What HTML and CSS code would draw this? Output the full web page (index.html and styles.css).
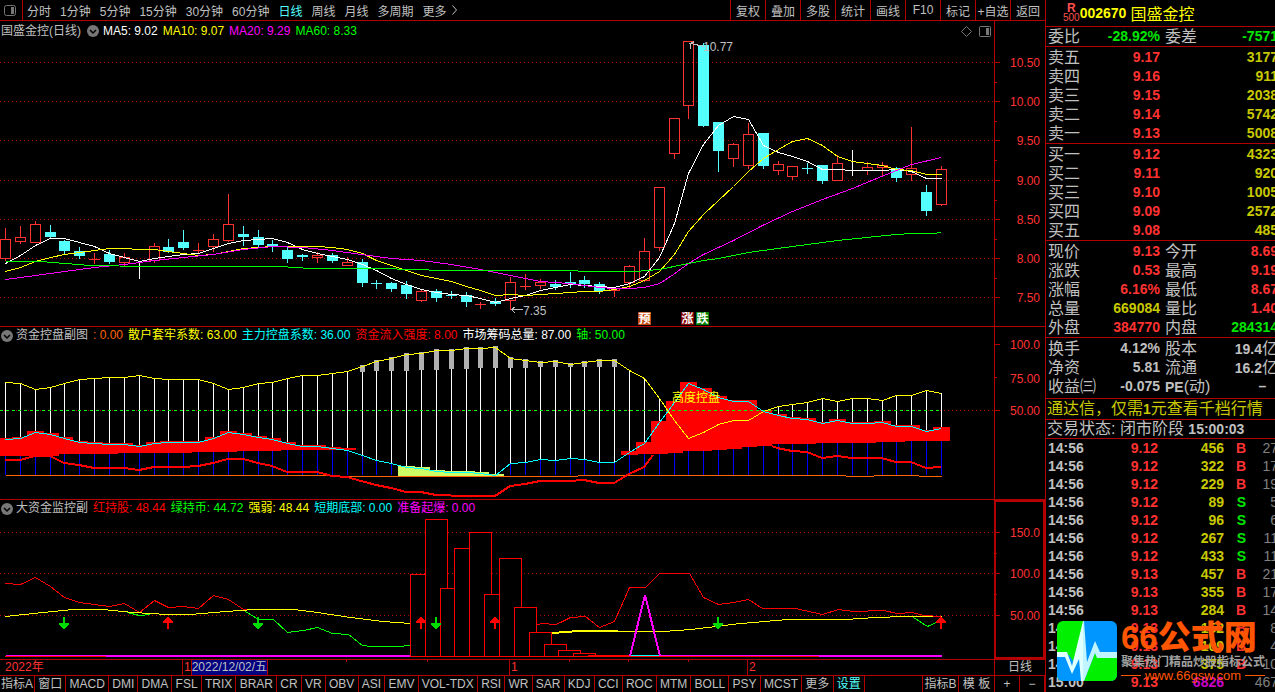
FILE: index.html
```html
<!DOCTYPE html>
<html lang="zh-CN">
<head>
    <meta charset="UTF-8">
    <meta name="viewport" content="width=device-width, initial-scale=1.0">
    <title>国盛金控 002670</title>
    <link rel="stylesheet" href="styles.css">
</head>
<body>

    <main class="main">
        <nav class="toolbar">
            <button class="layout-btn" aria-label="侧栏">
                <svg width="12" height="11" viewBox="0 0 12 11"><rect x="0.5" y="0.5" width="11" height="10" rx="2" fill="none" stroke="#777"/><rect x="7" y="2" width="3" height="7" fill="#777"/></svg>
            </button>
            <div class="periods">
                <button>分时</button>
                <button>1分钟</button>
                <button>5分钟</button>
                <button>15分钟</button>
                <button>30分钟</button>
                <button>60分钟</button>
                <button class="active">日线</button>
                <button>周线</button>
                <button>月线</button>
                <button>多周期</button>
                <button class="more">更多
                    <svg width="5" height="10" viewBox="0 0 5 10"><path d="M0.5 0.5 L4.5 5 L0.5 9.5" fill="none" stroke="#c0c0c0"/></svg>
                </button>
            </div>
            <div class="tools">
                <button>复权</button>
                <button>叠加</button>
                <button>多股</button>
                <button>统计</button>
                <button>画线</button>
                <button>F10</button>
                <button>标记</button>
                <button>+自选</button>
                <button>返回</button>
            </div>
        </nav>

        <section class="panel">
            <div class="plot">
                <div class="legend legend-main">
                    <span>国盛金控(日线)</span>
                    <button class="drop" aria-label="展开"><svg width="12" height="12" viewBox="0 0 12 12"><circle cx="6" cy="6" r="6" fill="#777"/><path d="M3 5 L6 8 L9 5" fill="none" stroke="#000" stroke-width="1.5"/></svg></button>
                    <span class="white">MA5: 9.02</span>
                    <span class="yellow">MA10: 9.07</span>
                    <span class="magenta">MA20: 9.29</span>
                    <span class="green">MA60: 8.33</span>
                    <span class="legend-icons">
                        <svg width="11" height="11" viewBox="0 0 11 11"><path d="M5.5 0.5 L10.5 5.5 L5.5 10.5 L0.5 5.5 Z" fill="none" stroke="#777"/></svg>
                        <svg width="12" height="11" viewBox="0 0 12 11"><rect x="0.5" y="0.5" width="11" height="10" rx="1" fill="none" stroke="#777"/><rect x="7" y="2" width="3" height="7" fill="#777"/></svg>
                    </span>
                </div>
                <svg id="kline" class="chart" viewBox="0 40 994 286" preserveAspectRatio="none"></svg>
            </div>
            <div class="axis"><svg id="axis1" class="chart" viewBox="0 21 50 305" preserveAspectRatio="none"></svg></div>
        </section>

        <section class="panel">
            <div class="plot">
                <div class="legend">
                    <button class="drop" aria-label="展开"><svg width="12" height="12" viewBox="0 0 12 12"><circle cx="6" cy="6" r="6" fill="#777"/><path d="M3 5 L6 8 L9 5" fill="none" stroke="#000" stroke-width="1.5"/></svg></button>
                    <span>资金控盘副图</span>
                    <span class="orange">: 0.00</span>
                    <span class="yellow">散户套牢系数: 63.00</span>
                    <span class="aqua">主力控盘系数: 36.00</span>
                    <span class="red">资金流入强度: 8.00</span>
                    <span class="white">市场筹码总量: 87.00</span>
                    <span class="green">轴: 50.00</span>
                </div>
                <svg id="control" class="chart" viewBox="0 344 994 155" preserveAspectRatio="none"></svg>
            </div>
            <div class="axis"><svg id="axis2" class="chart" viewBox="0 327 50 172" preserveAspectRatio="none"></svg></div>
        </section>

        <section class="panel">
            <div class="plot">
                <div class="legend">
                    <button class="drop" aria-label="展开"><svg width="12" height="12" viewBox="0 0 12 12"><circle cx="6" cy="6" r="6" fill="#777"/><path d="M3 5 L6 8 L9 5" fill="none" stroke="#000" stroke-width="1.5"/></svg></button>
                    <span>大资金监控副</span>
                    <span class="red">红持股: 48.44</span>
                    <span class="green">绿持币: 44.72</span>
                    <span class="yellow">强弱: 48.44</span>
                    <span class="aqua">短期底部: 0.00</span>
                    <span class="magenta">准备起爆: 0.00</span>
                </div>
                <svg id="funds" class="chart" viewBox="0 517 994 142" preserveAspectRatio="none"></svg>
            </div>
            <div class="axis selected"><svg id="axis3" class="chart" viewBox="1 502 47 155" preserveAspectRatio="none"></svg></div>
        </section>

        <div class="timeline">
            <span class="year">2022年</span>
            <span class="month">1<span class="date">2022/12/02/五</span></span>
            <span class="month">1</span>
            <span class="month">2</span>
            <span class="period">日线</span>
            <svg class="marks" viewBox="0 0 1045 2" preserveAspectRatio="none"><path d="M346.5 0V2M427.5 0V2M569.5 0V2M628.5 0V2M688.5 0V2" stroke="#b40000"/></svg>
        </div>

        <nav class="tabs">
            <div class="tab-list">
                <button class="first">指标A</button>
                <button>窗口</button>
                <button>MACD</button>
                <button>DMI</button>
                <button>DMA</button>
                <button>FSL</button>
                <button>TRIX</button>
                <button>BRAR</button>
                <button>CR</button>
                <button>VR</button>
                <button>OBV</button>
                <button>ASI</button>
                <button>EMV</button>
                <button>VOL-TDX</button>
                <button>RSI</button>
                <button>WR</button>
                <button>SAR</button>
                <button>KDJ</button>
                <button>CCI</button>
                <button>ROC</button>
                <button>MTM</button>
                <button>BOLL</button>
                <button>PSY</button>
                <button>MCST</button>
                <button>更多</button>
                <button class="active">设置</button>
            </div>
            <div class="tabs-right">
                <button>指标B</button>
                <button>模 板</button>
                <button class="zoom">+</button>
                <button class="zoom">−</button>
            </div>
        </nav>
    </main>

    <aside class="side">
        <h1 class="stock"><span class="tag">R<small>500</small></span><b>002670</b><span class="name">国盛金控</span></h1>

        <table class="quote">
            <tr><th>委比</th><td class="down">-28.92%</td><th>委差</th><td class="down">-7571</td></tr>
        </table>
        <table class="quote pad">
            <tr><th>卖五</th><td>9.17</td><th></th><td class="vol">3177</td></tr>
            <tr><th>卖四</th><td>9.16</td><th></th><td class="vol">911</td></tr>
            <tr><th>卖三</th><td>9.15</td><th></th><td class="vol">2038</td></tr>
            <tr><th>卖二</th><td>9.14</td><th></th><td class="vol">5742</td></tr>
            <tr><th>卖一</th><td>9.13</td><th></th><td class="vol">5008</td></tr>
        </table>
        <table class="quote pad">
            <tr><th>买一</th><td>9.12</td><th></th><td class="vol">4323</td></tr>
            <tr><th>买二</th><td>9.11</td><th></th><td class="vol">920</td></tr>
            <tr><th>买三</th><td>9.10</td><th></th><td class="vol">1005</td></tr>
            <tr><th>买四</th><td>9.09</td><th></th><td class="vol">2572</td></tr>
            <tr><th>买五</th><td>9.08</td><th></th><td class="vol">485</td></tr>
        </table>
        <table class="quote pad">
            <tr><th>现价</th><td>9.13</td><th>今开</th><td>8.69</td></tr>
            <tr><th>涨跌</th><td>0.53</td><th>最高</th><td>9.19</td></tr>
            <tr><th>涨幅</th><td>6.16%</td><th>最低</th><td>8.67</td></tr>
            <tr><th>总量</th><td class="vol">669084</td><th>量比</th><td>1.40</td></tr>
            <tr><th>外盘</th><td>384770</td><th>内盘</th><td class="down">284314</td></tr>
        </table>
        <table class="quote pad info">
            <tr><th>换手</th><td>4.12%</td><th>股本</th><td>19.4<span class="unit">亿</span></td></tr>
            <tr><th>净资</th><td>5.81</td><th>流通</th><td>16.2<span class="unit">亿</span></td></tr>
            <tr><th>收益㈢</th><td>-0.075</td><th><b>PE</b>(动)</th><td>–&nbsp;&nbsp;&nbsp;</td></tr>
        </table>
        <p class="ad">通达信，仅需<b>1</b>元查看千档行情</p>
        <p class="state">交易状态: 闭市阶段 <b>15:00:03</b></p>

        <table class="ticks" id="ticks"></table>

        <div class="brand">
            <svg width="60" height="60" viewBox="0 0 60 60">
                <defs><clipPath id="round"><rect width="60" height="60" rx="6"/></clipPath></defs>
                <g clip-path="url(#round)">
                    <rect width="27" height="60" fill="#00f000"/>
                    <rect x="27" width="33" height="60" fill="#0096ff"/>
                    <path d="M0 34 V60 H27 V15 L16 40 L12 34 Z" fill="#0096ff"/>
                    <path d="M27 60 L38 32 L42 37 H60 V60 Z" fill="#00f000"/>
                    <path d="M0 31 H10 L15 45 L26 0 V60 H24 L22 38 L15 53 L8 36 H0 Z" fill="#e0ffff"/>
                    <path d="M26 0 H27 L30 41 L38 20 L43 31 H60 V37 H40 L38 32 L27 60 H26 Z" fill="#c0f4ff"/>
                </g>
            </svg>
            <div class="brand-text">
                <strong>66公式网</strong>
                <span>聚集热门精品炒股指标公式</span>
                <em>www.66gsw.com</em>
            </div>
        </div>
    </aside>

    <script src="script.js"></script>
</body>
</html>
```

FILE: styles.css
```css
* {
    box-sizing: border-box;
}
body {
    margin: 0;
    height: 100vh;
    display: grid;
    grid-template-columns: 1fr 230px;
    overflow: hidden;
    background: #000;
    color: #c0c0c0;
    font-family: "Liberation Sans", "Noto Sans CJK SC", sans-serif;
    font-size: 12px;
}
button {
    background: none;
    border: 0;
    padding: 0;
    color: inherit;
    font: inherit;
    white-space: nowrap;
    cursor: pointer;
}
svg {
    display: block;
}
.main {
    display: grid;
    grid-template-rows: 21px 306fr 173fr 160fr 16px 16px;
    min-width: 0;
    min-height: 0;
}

/* top bar */
.toolbar {
    display: flex;
    border-bottom: 1px solid #b40000;
}
.layout-btn {
    width: 23px;
    padding-left: 4px;
    border-right: 1px solid #b40000;
}
.periods {
    display: flex;
    flex: 1;
    gap: 9px;
    padding-left: 4px;
}
.more {
    display: flex;
    align-items: center;
    gap: 5px;
}
.tools button {
    width: 35px;
    height: 20px;
    border-left: 1px solid #b40000;
}
.tools {
    display: flex;
}
.active {
    color: #54ffff;
}

/* chart panels */
.panel {
    display: flex;
    min-height: 0;
    border-bottom: 1px solid #b40000;
}
.plot {
    display: flex;
    flex-direction: column;
    flex: 1;
    min-width: 0;
}
.legend {
    display: flex;
    align-items: center;
    gap: 5px;
    height: 17px;
    padding-left: 1px;
    white-space: nowrap;
    line-height: 17px;
}
.legend .drop {
    margin-right: -2px;
}
.legend-main {
    height: 19px;
    padding-top: 1px;
    line-height: 18px;
}
.legend-main .drop {
    margin: 0 -1px 0 1px;
}
.legend-icons {
    display: flex;
    gap: 7px;
    margin-left: auto;
    padding-right: 3px;
}
.chart {
    flex: 1;
    width: 100%;
    height: 100%;
    min-height: 0;
    shape-rendering: crispEdges;
}
.chart text {
    font-size: 12px;
}
.axis {
    width: 51px;
    border-left: 1px solid #b40000;
}
.axis text {
    fill: #ff3232;
}
.axis.selected {
    border: 2px solid #b40000;
}
.white { color: #fff; }
.yellow { color: #ffff00; }
.magenta { color: #ff00ff; }
.green { color: #00ff00; }
.orange { color: #ff6400; }
.aqua { color: #00ffff; }
.red { color: #ff0000; }

/* dates under the charts */
.timeline {
    position: relative;
    display: grid;
    grid-template-columns: 182fr 327fr 238fr 247fr 51px;
    border-bottom: 1px solid #b40000;
    color: #ff3232;
    line-height: 15px;
}
.year {
    padding-left: 5px;
}
.month {
    display: flex;
    border-left: 1px solid #b40000;
    padding-left: 1px;
}
.date {
    background: #000080;
    color: #c0c0c0;
    border: solid #b40000;
    border-width: 0 1px;
}
.period {
    border-left: 1px solid #b40000;
    color: #c0c0c0;
    text-align: center;
}
.marks {
    position: absolute;
    top: 0;
    left: 0;
    width: 100%;
    height: 2px;
}

/* indicator tabs */
.tabs {
    display: flex;
    justify-content: space-between;
    overflow: hidden;
}
.tab-list {
    display: flex;
    flex: 1;
    max-width: 865px;
}
.tabs button {
    flex: auto;
    padding: 0 3px;
    border-right: 1px solid #b40000;
    line-height: 16px;
}
.tabs .first {
    flex: none;
    padding: 0 1px;
}
.tabs-right {
    display: flex;
    border-left: 1px solid #b40000;
}
.tabs-right button {
    width: 36px;
    padding: 0;
}
.tabs-right .zoom {
    width: 25px;
}

/* quote column */
.side {
    position: relative;
    border-left: 1px solid #b40000;
    overflow: hidden;
    white-space: nowrap;
    font-size: 16px;
}
.side b {
    font-size: 14px;
}
.stock {
    display: flex;
    align-items: center;
    height: 27px;
    margin: 0;
    padding-left: 17px;
    border-bottom: 1px solid #b40000;
    color: #ffff00;
    font-size: 16px;
    font-weight: normal;
}
.tag {
    display: flex;
    flex-direction: column;
    align-items: center;
    color: #ff5050;
    font-size: 12px;
    font-weight: bold;
    line-height: 10px;
}
.tag small {
    font-size: 10px;
    font-weight: normal;
}
.name {
    padding-left: 4px;
}
table {
    table-layout: fixed;
    border-spacing: 0;
}
th, td {
    padding: 0;
}
.quote {
    display: block;
    width: 240px;
    padding-left: 2px;
    border-bottom: 1px solid #b40000;
}
.quote.pad {
    padding-top: 1px;
}
.quote.info {
    padding-bottom: 2px;
}
.quote tr {
    display: grid;
    grid-template-columns: 32px 80px 4px 114px;
    height: 19px;
    line-height: 19px;
}
.quote th {
    font-weight: normal;
    text-align: left;
}
.quote td {
    color: #ff3232;
    font-size: 14px;
    font-weight: bold;
    text-align: right;
}
.quote th:nth-child(3) {
    padding-left: 5px;
}
.quote .down {
    color: #00e600;
}
.quote .vol {
    color: #c8c800;
}
.quote.info td {
    color: #c0c0c0;
}
.unit {
    font-size: 16px;
    font-weight: normal;
}
.ad, .state {
    margin: 0;
    padding-left: 1px;
    border-bottom: 1px solid #b40000;
}
.ad {
    height: 21px;
    line-height: 20px;
    color: #c8c800;
}
.state {
    height: 19px;
    line-height: 18px;
}
.ticks {
    width: 232px;
    padding-left: 2px;
    font-size: 14px;
    font-weight: bold;
}
.ticks td {
    height: 18px;
    line-height: 18px;
    text-align: right;
}
.ticks td:nth-child(1) { width: 40px; text-align: left; }
.ticks td:nth-child(2) { width: 70px; color: #ff3232; }
.ticks td:nth-child(3) { width: 66px; color: #c8c800; }
.ticks td:nth-child(4) { width: 22px; }
.ticks td:nth-child(5) { color: #808080; font-weight: normal; }
.ticks .buy { color: #ff3232; }
.ticks .sell { color: #00e600; }
.ticks tr:last-child td:nth-child(3) { color: #c800c8; }

/* site badge over the tick list */
.brand {
    position: absolute;
    left: 11px;
    bottom: 10px;
    display: flex;
    gap: 4px;
}
.brand-text {
    display: flex;
    flex-direction: column;
    color: #ff5500;
}
.brand-text strong {
    font-size: 33px;
    font-weight: 900;
    line-height: 34px;
}
.brand-text span {
    color: #a0a0a0;
    font-size: 12px;
    font-weight: bold;
    line-height: 14px;
}
.brand-text em {
    display: flex;
    align-items: center;
    gap: 4px;
    font-size: 13px;
    font-style: normal;
    line-height: 13px;
}
.brand-text em::before, .brand-text em::after {
    content: "";
    width: 20px;
    border-top: 1px solid #ff5500;
}
```

FILE: script.js
```js
const LINE = "#b40000";
const RED = "#ff3232";
const CYAN = "#54ffff";

// x of the i-th trading day
const X = i => 5 + Math.round(i * 936 / 63);

function line(x1, y1, x2, y2, color, w = 1, dash = "") {
    return `<line x1="${x1}" y1="${y1}" x2="${x2}" y2="${y2}" stroke="${color}" stroke-width="${w}" stroke-dasharray="${dash}"/>`;
}
function rect(x, y, w, h, fill, stroke = "none") {
    return `<rect x="${x}" y="${y}" width="${w}" height="${h}" fill="${fill}" stroke="${stroke}"/>`;
}
// odd line widths sit on pixel centres
function poly(points, color, w = 1) {
    const pts = points.split(" ").map(p => p.split(",").map(n => Math.floor(n) + w % 2 / 2).join(",")).join(" ");
    return `<polyline points="${pts}" fill="none" stroke="${color}" stroke-width="${w}"/>`;
}
function series(ys) {
    return ys.map((y, i) => X(i) + "," + y).join(" ");
}
function text(x, y, s, fill, extra = "") {
    return `<text x="${x}" y="${y}" fill="${fill}" ${extra}>${s}</text>`;
}
function draw(id, s) {
    document.getElementById(id).innerHTML = s;
}
function axis(id, labels, minor) {
    let s = "";
    labels.forEach(([y, t]) => {
        s += line(0, y + 0.5, 5, y + 0.5, LINE) + text(45, y + 5, t, RED, 'text-anchor="end"');
    });
    minor.forEach(y => s += line(0, y + 0.5, 2, y + 0.5, LINE));
    draw(id, s);
}

// kind, high, body top, body bottom, low
const candles = [
    ["r",228,239,258,260],["r",226,237,241,243],["r",221,224,242,242],["c",225,232,237,238],
    ["c",240,241,251,254],["c",247,251,256,258],["r",253,259,259,263],["c",250,254,262,263],
    ["r",253,257,262,265],["w",262,266,266,278],["r",243,246,260,262],["c",239,247,252,252],
    ["c",230,242,248,249],["r",243,250,251,252],["r",234,239,246,251],["r",194,224,240,241],
    ["c",226,234,237,245],["c",230,237,245,247],["c",240,244,246,251],["c",246,250,259,262],
    ["c",254,255,257,260],["r",252,255,257,262],["c",253,255,261,262],["r",257,262,265,265],
    ["c",259,262,283,286],["c",280,283,284,288],["c",282,283,289,291],["c",281,285,294,298],
    ["r",289,291,300,301],["c",289,291,298,301],["c",291,295,296,298],["c",292,295,302,306],
    ["r",302,304,305,308],["c",298,301,304,305],["r",277,282,300,309],["r",274,286,287,289],
    ["r",279,282,285,288],["c",280,284,287,289],["c",272,282,284,287],["c",276,280,284,287],
    ["c",282,284,291,293],["r",287,288,290,296],["r",265,266,282,287],["r",238,251,280,281],
    ["r",187,187,247,250],["r",118,118,153,158],["r",41,41,105,118],["c",43,45,126,126],
    ["c",122,122,151,171],["r",143,144,158,166],["r",123,134,165,168],["c",133,133,166,168],
    ["r",161,164,170,174],["r",166,166,176,179],["c",163,168,169,173],["c",165,165,181,183],
    ["r",155,163,180,180],["w",150,170,170,175],["r",162,167,170,174],["r",162,165,167,175],
    ["c",167,168,178,181],["r",127,168,174,180],["c",185,192,211,215],["r",166,169,204,205]
];

const ma5 = [263,255,245,238,238,242,246,253,257,261,258,256,254,253,248,243,240,239,238,242,249,253,256,259,264,270,278,284,289,292,294,295,298,302,298,295,290,287,284,285,286,287,283,276,257,223,173,144,125,116,119,145,152,156,161,169,169,170,170,170,169,171,178,178];
const ma10 = [271,267,261,257,254,252,250,248,248,249,249,251,253,255,254,251,248,247,246,246,246,246,247,249,253,260,265,270,275,278,281,286,290,295,294,295,294,293,292,291,291,289,286,280,271,254,231,214,200,186,171,158,149,141,138,145,156,161,163,165,169,170,174,174];

let s = "";
[62, 101, 140, 180, 219, 258, 297].forEach(y => s += line(0, y + 0.5, 994, y + 0.5, LINE, 1, "1 3"));
candles.forEach(([kind, high, top, bottom, low], i) => {
    const x = X(i);
    const color = { r: RED, c: CYAN, w: "#fff" }[kind];
    if (kind === "r" && bottom - top > 1) {
        s += line(x + 0.5, high, x + 0.5, top, color) + line(x + 0.5, bottom, x + 0.5, low + 1, color);
        s += rect(x - 4.5, top + 0.5, 10, bottom - top, "none", color);
    } else {
        s += line(x + 0.5, high, x + 0.5, low + 1, color);
        s += rect(x - 5, top, 11, Math.max(bottom - top, 1), color);
    }
});
s += poly(series(ma5), "#fff") + poly(series(ma10), "#ffff00");
s += poly("5,279 35,275 64,271 94,267 124,264 154,260 183,257 213,254 243,249 272,246 302,247 332,250 361,254 391,258 421,260 451,264 480,269 510,275 540,281 569,283 584,285 599,287 614,288 629,288 644,287 659,283 673,274 688,263 703,254 733,240 762,225 792,211 822,199 852,188 881,176 911,164 941,157", "#ff00ff");
s += poly("5,261 40,261 90,265 147,266 280,266 310,268 380,268 445,270 577,270 578,271 635,271 659,269 688,263 703,260 718,258 748,252 777,248 807,244 837,240 866,237 896,234 911,233 933,233 941,232", "#00ff00");
s += poly("704,46 690,43 694,41", "#c0c0c0") + poly("690,43 690,48", "#c0c0c0");
s += text(703, 51, "10.77", "#c0c0c0");
s += poly("522,309 511,309", "#c0c0c0") + poly("515,306 511,309 515,313", "#c0c0c0");
s += text(523, 315, "7.35", "#c0c0c0");
[[638, "预", "#c04a10"], [681, "涨", "#800000"], [696, "跌", "#008000"]].forEach(([x, t, color]) => {
    s += rect(x, 312, 13, 13, color) + text(x + 0.5, 323, t, "#fff", 'font-weight="bold"');
});
draw("kline", s);
axis("axis1", [[62,"10.50"],[101,"10.00"],[140,"9.50"],[180,"9.00"],[219,"8.50"],[258,"8.00"],[297,"7.50"]], [82,121,160,200,239,278]);

// control panel
const retail = [382,383,389,387,383,379,378,377,377,375,378,379,379,379,383,389,387,383,382,378,375,375,373,371,366,361,358,354,353,350,350,348,348,347,358,360,362,361,364,362,360,360,370,378,398,420,438,432,424,420,420,411,406,404,402,398,401,398,398,400,395,395,390,393];
const major = [439,438,432,434,438,442,443,444,444,446,443,442,442,442,438,432,434,437,439,443,446,446,448,450,455,460,463,467,468,471,472,472,473,475,463,462,459,460,458,459,462,462,452,443,422,402,383,389,397,401,401,411,415,418,419,423,420,423,423,422,426,426,431,428];
const base = i => i < 4 ? 456 : i < 8 ? 454 : i < 13 ? 453 : i < 16 ? 452 : i < 19 ? 451 : i < 24 ? 450 :
    i < 43 ? 455 : i < 45 ? 454 : i < 46 ? 453 : i < 48 ? 451 : i < 49 ? 450 : i < 50 ? 449 : i < 51 ? 447 : i < 52 ? 446 : i < 55 ? 444 : i < 59 ? 443 : i < 61 ? 442 : 441;
const isRed = i => i < 24 || i > 41;
const capEnd = [372,371,371,371,370,370,369,369,368,368,368,368,367,367,367,367,367,367];

s = line(0, 410.5, 994, 410.5, LINE, 1, "1 3");
major.forEach((y, i) => {
    const x = X(i);
    s += line(x + 0.5, Math.min(y, 475), x + 0.5, 475, "#0000ff");
    if (retail[i] < y) s += line(x + 0.5, retail[i], x + 0.5, y, "#fff");
});
s += rect(0, 439, 12, 17, "#ff0000");
major.forEach((y, i) => {
    const x = X(i);
    if (isRed(i)) s += rect(x - 8, Math.min(y - 1, base(i) - 2), 17, Math.max(base(i) - y + 1, 2), "#ff0000");
    if (i > 26 && i < 34) s += rect(x - 8, y - 1, 17, 477 - y, "#ccff66");
    if (i > 23 && i < 42) s += rect(x - 2, retail[i] - 1, 5, capEnd[i - 24] - retail[i] + 1, "#b0b0b0");
});
s += poly("5,475 332,475 333,476 577,476 578,475 845,475 846,476 873,476 874,475 918,475 919,476 941,476", "#ff6400");
s += poly("5,460 20,460 35,456 50,456 64,463 79,465 94,468 124,468 139,470 154,467 183,467 198,466 213,463 228,459 243,459 258,463 272,466 287,472 317,472 332,476 347,477 361,481 376,485 391,488 406,492 421,492 436,495 465,496 495,496 510,486 525,484 540,481 569,481 584,480 599,483 614,483 629,474 644,467 653,455", "#ff0000", 2);
s += poly("772,446 777,448 792,451 807,452 822,458 837,456 852,458 881,458 896,462 911,462 926,468 941,467", "#ff0000", 2);
s += line(0, 410.5, 941, 410.5, "#00ff00", 1, "3 3");
s += poly(series(retail), "#ffff00") + poly(series(major), "#00ffff");
s += text(672, 402, "高度控盘", "#ffff00");
draw("control", s);
axis("axis2", [[344,"100.0"],[410,"50.00"]], [377]);
document.getElementById("axis2").innerHTML += text(45, 383, "75.00", RED, 'text-anchor="end"');

// big money panel
s = "";
[532, 573, 615].forEach(y => s += line(0, y + 0.5, 994, y + 0.5, LINE, 1, "1 3"));
s += poly("5,583 20,584 35,577 50,586 64,597 79,602 94,604 109,606 124,603 139,612 154,600 168,607 183,606 198,608 213,595 228,599 243,609 258,609", "#ff0000");
s += poly("127,612 139,615 150,614", "#00ff00");
s += poly("245,611 258,619 273,619 287,632 303,630 317,627 332,633 348,634 362,645 370,646 398,646 410,645", "#00ff00");
s += poly("913,617 927,626 936,622", "#00ff00");
s += poly("5,616 33,613 73,609 102,609 133,612 167,614 190,614 213,612 253,609 293,609 317,612 350,617 383,621 410,623 552,633 578,631 617,631 663,631 690,629 707,627 740,623 753,622 787,619 845,619 875,617 905,616 941,616", "#ffff00");
[[410,574],[425,519],[440,588],[454,548],[469,532],[484,594],[499,558],[514,607],[529,632],[544,644],[558,650],[573,653]].forEach(([x, y]) => {
    s += rect(x + 0.5, y + 0.5, 22, 656 - y, "#000", "#ff0000");
});
s += poly("537,624 542,623 555,624 560,622 570,617 585,616 599,627 614,621 629,587 645,587 659,573 689,573 703,597 718,604 733,602 748,599 762,608 795,608 822,614 838,609 853,611 883,610 897,613 912,612 923,615 941,616", "#ff0000");
s += poly("552,632 578,630 617,630", "#ffff00");
s += line(5, 656.5, 941, 656.5, "#ff0000") + line(588, 655.5, 630, 655.5, "#ff0000");
s += line(6, 655.5, 410, 655.5, "#ff00ff") + line(106, 656, 410, 656, "#ff00ff", 2);
s += line(659, 655.5, 820, 655.5, "#ff00ff") + line(819, 656, 942, 656, "#ff00ff", 2);
s += line(630, 655.5, 659, 655.5, "#00ffff");
s += poly("630,656 645,595 660,656", "#ff00ff", 2);
[64, 258, 436, 718].forEach(x => s += `<path d="M${x - 1} 617h2v6h4v1l-4 5h-2l-4 -5v-1h4z" fill="#00dc00"/>`);
[168, 421, 495, 941].forEach(x => s += `<path d="M${x - 1} 629h2v-6h4v-1l-4 -5h-2l-4 5v1h4z" fill="#ff0000"/>`);
draw("funds", s);
axis("axis3", [[532,"150.0"],[573,"100.0"],[615,"50.00"]], [553, 594]);

// time, price, volume, side, count
const ticks = [
    ["14:56","9.12",456,"B",27],["14:56","9.12",322,"B",17],["14:56","9.12",229,"B",19],
    ["14:56","9.12",89,"S",5],["14:56","9.12",96,"S",6],["14:56","9.12",267,"S",11],
    ["14:56","9.12",433,"S",11],["14:56","9.13",457,"B",21],["14:56","9.13",355,"B",17],
    ["14:56","9.13",284,"B",14],["14:56","9.13",152,"B",8],["14:56","9.13",109,"B",4],
    ["14:56","9.13",375,"B",10],["15:00","9.13",6826,"",467]
];
document.getElementById("ticks").innerHTML = ticks.map(([time, price, vol, side, count]) =>
    `<tr><td>${time}</td><td>${price}</td><td>${vol}</td><td class="${side === "B" ? "buy" : "sell"}">${side}</td><td>${count}</td></tr>`
).join("");
```
